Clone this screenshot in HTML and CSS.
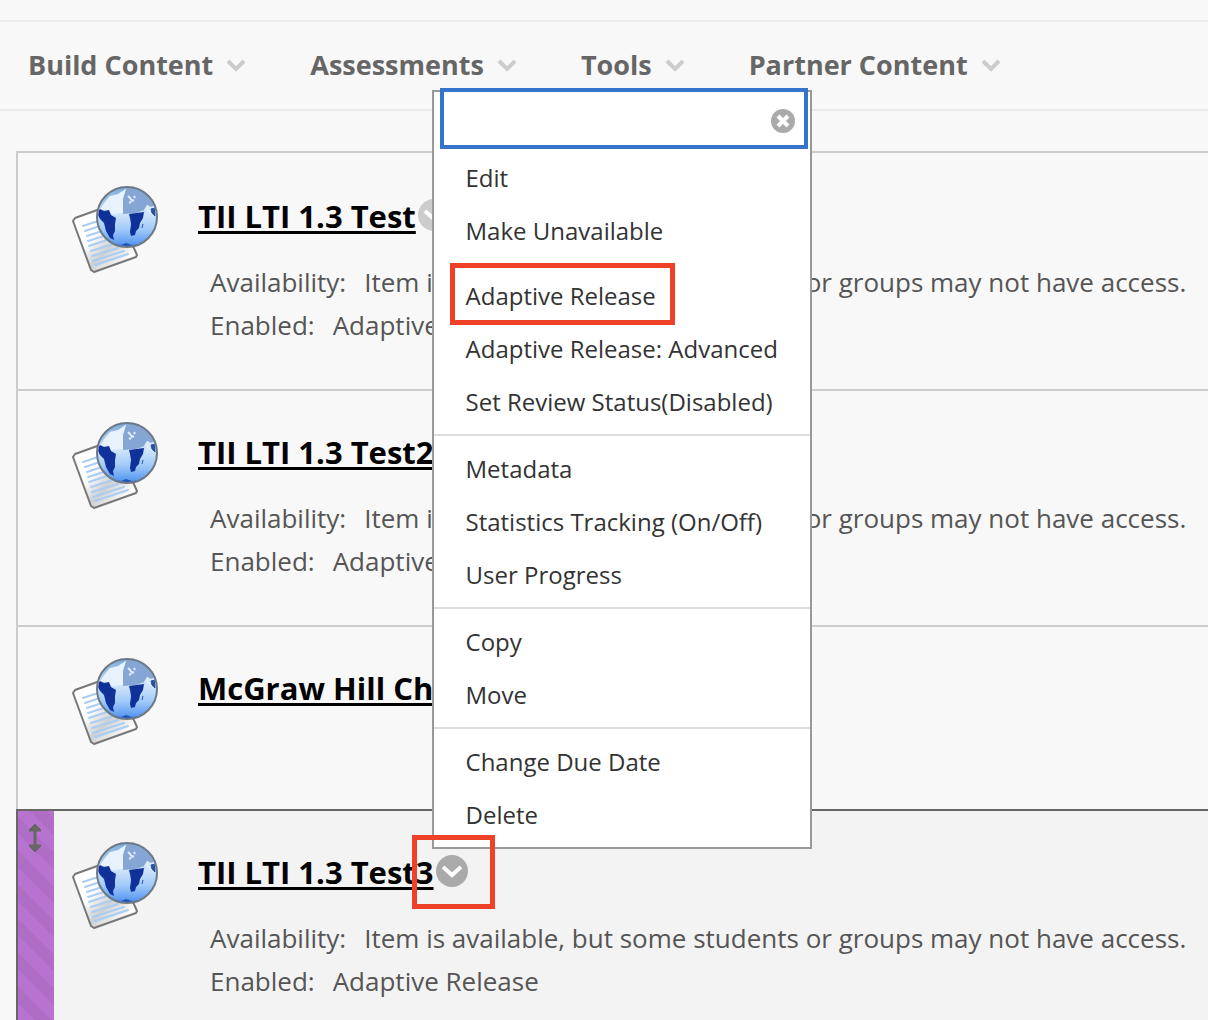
FILE: index.html
```html
<!DOCTYPE html>
<html lang="en">
<head>
    <meta charset="UTF-8">
    <title>Course Content</title>
    <link rel="stylesheet" href="styles.css">
</head>
<body>
    <svg class="sprite" aria-hidden="true">
        <defs>
            <linearGradient id="sea" x1="0" y1="0" x2="0" y2="1">
                <stop offset="0" stop-color="#7ba9dd"/>
                <stop offset="0.45" stop-color="#cfe4fa"/>
                <stop offset="0.7" stop-color="#a3cbf8"/>
                <stop offset="1" stop-color="#4c90f0"/>
            </linearGradient>
            <linearGradient id="paper" x1="0" y1="0" x2="1" y2="1">
                <stop offset="0.4" stop-color="#fff"/>
                <stop offset="0.6" stop-color="#d0d0d0"/>
                <stop offset="0.85" stop-color="#fff"/>
            </linearGradient>
            <clipPath id="disc"><circle cx="55" cy="32" r="29"/></clipPath>
        </defs>
        <symbol id="page-globe" viewBox="0 0 88 90">
            <path d="M3 33 42 19 65 70 64 72 22 87 19 85 1 36z" fill="url(#paper)" stroke="#777" stroke-width="2" stroke-linejoin="round"/>
            <path d="M11 41 26 36M13 46 28 41M15 51 30 46M16 56 35 50M17 61 38 54M19 66 44 58M20 71 46 63M21 76 52 66M23 80 56 69" stroke="#a9cdf3" stroke-width="2" stroke-linecap="round"/>
            <circle cx="55" cy="32" r="30" fill="url(#sea)"/>
            <g clip-path="url(#disc)">
                <path d="M27 26 33 17 38 11 46 9 55 3 52 12 51 28 40 29 34 25z" fill="#e8f2fc"/>
                <path d="M55 1 72 5 84 20 79 22 75 20 72 25 64 28 51 29 51 14z" fill="#85a5d5"/>
                <path d="m56 11 2 2 2 3 2-1m-5 2 2 1m3-7 1 2" fill="none" stroke="#dceafa" stroke-width="2"/>
                <path d="m72 25 3-5 4 2 5-2 2 12-5-4-4 1z" fill="#dceafa"/>
                <path d="m28 24 4 2 5-1 2 5 5 3-1 6 0 7-2 4 1 5-4-2-4-7-2-8-4-4-3-6z" fill="#10319a"/>
                <path d="m57 29 15-2-1 6-3 5-1 5-3 3-1 4-4 1-1-4 1-8-1-6z" fill="#10319a"/>
                <path d="m71 39-1 4M79 24l1 4 3 3v-8z" fill="#2750a9" stroke="#2750a9"/>
                <path d="m38 57 6 2 5 1 5-2 6 2 8-1 3-1-7 6H46z" fill="#1c55b9"/>
            </g>
            <circle cx="55" cy="32" r="30" fill="none" stroke="#6d7885" stroke-width="2"/>
        </symbol>
        <symbol id="chevron" viewBox="0 0 20 14">
            <path d="m2 3 8 8 8-8" fill="none" stroke="currentColor" stroke-width="4"/>
        </symbol>
        <symbol id="circle-chevron" viewBox="0 0 32 32">
            <circle cx="16" cy="16" r="16" fill="currentColor"/>
            <path d="m7 12 9 8 9-8" fill="none" stroke="#fff" stroke-width="4"/>
        </symbol>
    </svg>

    <nav class="action-bar">
        <button class="action">Build Content <svg class="chevron"><use href="#chevron"/></svg></button>
        <button class="action">Assessments <svg class="chevron"><use href="#chevron"/></svg></button>
        <button class="action">Tools <svg class="chevron"><use href="#chevron"/></svg></button>
        <button class="action">Partner Content <svg class="chevron"><use href="#chevron"/></svg></button>
    </nav>

    <ul class="content-list">
        <li class="item">
            <svg class="item-icon"><use href="#page-globe"/></svg>
            <div class="item-body">
                <div class="item-head">
                    <h3 class="item-title"><a href="#">TII LTI 1.3 Test</a></h3>
                    <div class="options"><button class="options-btn" aria-label="Options"><svg><use href="#circle-chevron"/></svg></button></div>
                </div>
                <dl class="details">
                    <div><dt>Availability:</dt><dd>Item is available, but some students or groups may not have access.</dd></div>
                    <div><dt>Enabled:</dt><dd>Adaptive Release</dd></div>
                </dl>
            </div>
        </li>
        <li class="item">
            <svg class="item-icon"><use href="#page-globe"/></svg>
            <div class="item-body">
                <div class="item-head">
                    <h3 class="item-title"><a href="#">TII LTI 1.3 Test2</a></h3>
                    <div class="options"><button class="options-btn" aria-label="Options"><svg><use href="#circle-chevron"/></svg></button></div>
                </div>
                <dl class="details">
                    <div><dt>Availability:</dt><dd>Item is available, but some students or groups may not have access.</dd></div>
                    <div><dt>Enabled:</dt><dd>Adaptive Release</dd></div>
                </dl>
            </div>
        </li>
        <li class="item">
            <svg class="item-icon"><use href="#page-globe"/></svg>
            <div class="item-body">
                <div class="item-head">
                    <h3 class="item-title"><a href="#">McGraw Hill Chapter</a></h3>
                </div>
            </div>
        </li>
        <li class="item active">
            <div class="handle">
                <svg class="move" viewBox="0 0 12 28"><path d="M6 0 12 6V7H7v14h5v1l-6 6-6-6v-1h5V7H0V6z" fill="#666" stroke="#666"/></svg>
            </div>
            <svg class="item-icon"><use href="#page-globe"/></svg>
            <div class="item-body">
                <div class="item-head">
                    <h3 class="item-title"><a href="#">TII LTI 1.3 Test3</a></h3>
                    <div class="options marked">
                        <button class="options-btn" aria-label="Options" aria-expanded="true"><svg><use href="#circle-chevron"/></svg></button>
                        <div class="menu">
                            <div class="menu-search">
                                <input type="text" aria-label="Search options">
                                <button class="close" aria-label="Close">
                                    <svg viewBox="0 0 24 24"><circle cx="12" cy="12" r="12" fill="#aaa"/><path d="m7 7 10 10M17 7 7 17" stroke="#fff" stroke-width="4"/></svg>
                                </button>
                            </div>
                            <ul>
                                <li><a href="#">Edit</a></li>
                                <li><a href="#">Make Unavailable</a></li>
                            </ul>
                            <ul>
                                <li class="highlight"><a href="#">Adaptive Release</a></li>
                                <li><a href="#">Adaptive Release: Advanced</a></li>
                                <li><a href="#">Set Review Status(Disabled)</a></li>
                            </ul>
                            <ul class="ruled">
                                <li><a href="#">Metadata</a></li>
                                <li><a href="#">Statistics Tracking (On/Off)</a></li>
                                <li><a href="#">User Progress</a></li>
                            </ul>
                            <ul class="ruled">
                                <li><a href="#">Copy</a></li>
                                <li><a href="#">Move</a></li>
                            </ul>
                            <ul class="ruled">
                                <li><a href="#">Change Due Date</a></li>
                                <li><a href="#">Delete</a></li>
                            </ul>
                        </div>
                    </div>
                </div>
                <dl class="details">
                    <div><dt>Availability:</dt><dd>Item is available, but some students or groups may not have access.</dd></div>
                    <div><dt>Enabled:</dt><dd>Adaptive Release</dd></div>
                </dl>
            </div>
        </li>
    </ul>
</body>
</html>
```
FILE: styles.css
```css
*,
*::after {
    box-sizing: border-box;
}

body {
    margin: 0;
    padding-top: 20px;
    min-height: 100vh;
    display: flex;
    flex-direction: column;
    background-color: #f8f8f8;
    color: #555;
    font-family: 'Open Sans', 'Noto Sans', sans-serif;
    font-size: 26px;
}

ul, dl, dd, h3 {
    margin: 0;
    padding: 0;
    list-style: none;
}

button {
    padding: 0;
    border: 0;
    background: none;
    font: inherit;
    color: inherit;
    cursor: pointer;
}

.sprite {
    position: absolute;
    width: 0;
    height: 0;
}

/* action bar */
.action-bar {
    display: flex;
    align-items: center;
    gap: 64px;
    height: 91px;
    padding: 0 28px 2px;
    border-top: 2px solid #eaeaea;
    border-bottom: 2px solid #eaeaea;
}

.action {
    display: flex;
    align-items: center;
    gap: 13px;
    font-size: 27px;
    font-weight: 700;
    color: #666;
    white-space: nowrap;
}

.chevron {
    width: 20px;
    height: 14px;
    color: #ccc;
}

/* content list */
.content-list {
    flex: 1;
    display: flex;
    flex-direction: column;
    margin: 40px 0 0 16px;
    padding-top: 2px;
    border-top: 2px solid #ccc;
    border-left: 2px solid #ccc;
}

.item {
    display: flex;
    align-items: flex-start;
    min-height: 184px;
    padding: 30px 0 42px 54px;
    border-bottom: 2px solid #ccc;
}

.item-icon {
    flex: none;
    width: 88px;
    height: 90px;
}

.item-body {
    flex: 1;
    padding-left: 38px;
}

.item-head {
    display: flex;
    align-items: center;
    gap: 2px;
    height: 60px;
}

.item-title {
    padding-top: 2px;
    font-size: 31px;
    line-height: 42px;
    white-space: nowrap;
}

.item-title a {
    color: #000;
    text-decoration-thickness: 3px;
    text-underline-offset: 3px;
}

.options {
    position: relative;
    height: 32px;
    color: #ccc;
}

.options-btn,
.options-btn svg {
    display: block;
    width: 32px;
    height: 32px;
}

.details {
    padding: 16px 0 0 12px;
    line-height: 43px;
}

.details div {
    display: flex;
    gap: 18px;
    white-space: nowrap;
}

/* selected item */
.active {
    flex: 1;
    position: relative;
    margin: -2px 0 0 -2px;
    padding: 30px 0 0 56px;
    border-top: 2px solid #666;
    border-bottom: 0;
    background-color: #f3f3f3;
}

.handle {
    position: absolute;
    top: 0;
    bottom: 0;
    left: 0;
    width: 38px;
    border-left: 2px solid #666;
    background: repeating-linear-gradient(45deg, #b872cf 0 12px, #b06dc5 12px 24px);
}

.move {
    display: block;
    width: 12px;
    height: 28px;
    margin: 13px auto 0 11px;
}

.marked {
    color: #aaa;
}

.marked::after {
    content: '';
    position: absolute;
    top: -20px;
    left: -24px;
    width: 83px;
    height: 74px;
    border: 5px solid #ee4128;
    pointer-events: none;
}

/* options menu */
.menu {
    position: absolute;
    bottom: 38px;
    left: -4px;
    width: 380px;
    border: 2px solid #999;
    background-color: #fff;
    font-size: 24px;
    white-space: nowrap;
}

.menu-search {
    display: flex;
    align-items: center;
    height: 53px;
    margin: 0 6px 0 10px;
    padding: 4px 9px 0 0;
    outline: 4px solid #3474cc;
}

.menu-search input {
    flex: 1;
    min-width: 0;
    height: 100%;
    border: 0;
    outline: 0;
    background: none;
    font: inherit;
}

.close,
.close svg {
    display: block;
    width: 24px;
    height: 24px;
}

.menu ul {
    padding: 6px 0;
}

.menu .ruled {
    border-top: 2px solid #ddd;
}

.menu a {
    display: block;
    padding: 0 32px;
    line-height: 53px;
    color: #333;
    text-decoration: none;
}

.highlight {
    position: relative;
}

.highlight::after {
    content: '';
    position: absolute;
    top: -6px;
    left: 16px;
    width: 225px;
    height: 62px;
    border: 5px solid #ee4128;
    pointer-events: none;
}
```
